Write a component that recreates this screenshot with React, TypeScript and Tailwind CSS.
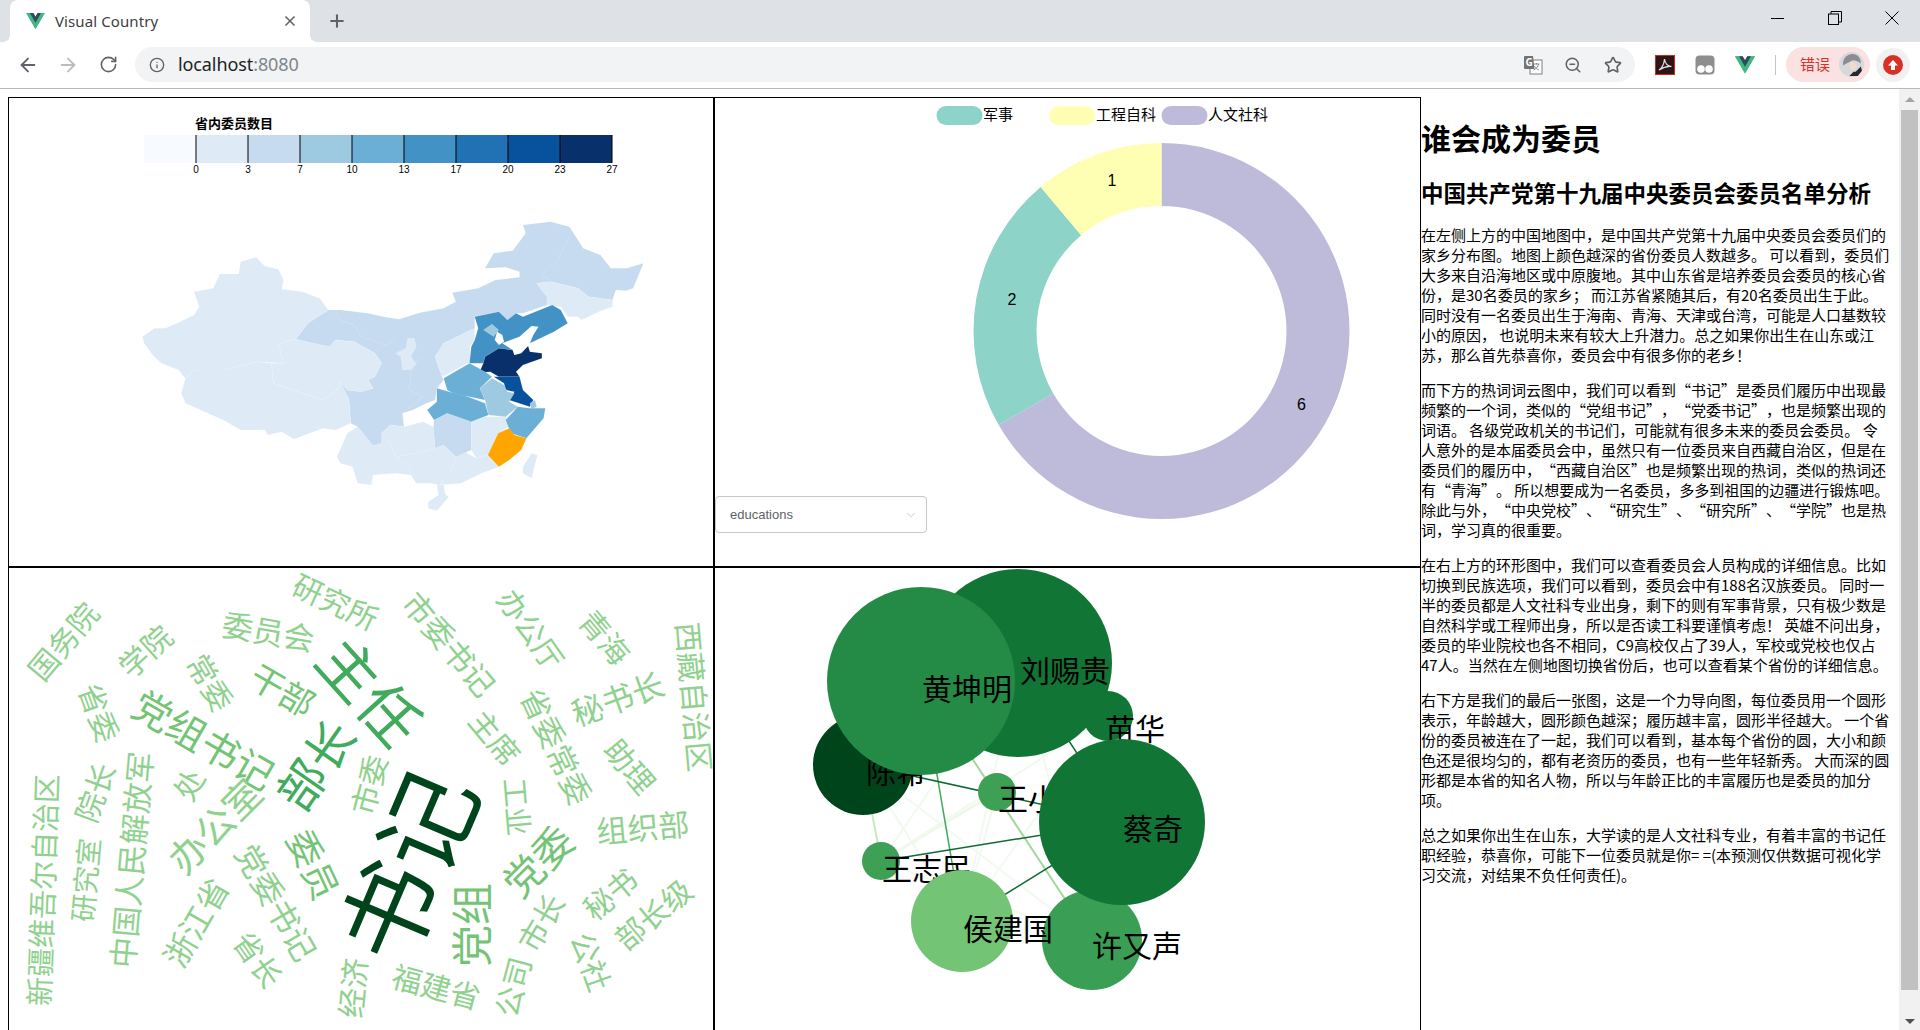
import React from "react";
import { ArrowLeft, ArrowRight, Info, Plus, RotateCw, Star, X, ZoomOut, ChevronDown } from "lucide-react";

const L1 = "#deebf7";
const L2 = "#c6dbef";
const L3 = "#9ecae1";
const L4 = "#6baed6";
const L5 = "#4292c6";

// province outlines, in the map's own units
const provinces: [string, string][] = [
  [L2, "605,330 640,330 720,340 765,350 810,358 870,338 940,325 975,305 965,278 1040,265 1090,240 1160,232 1160,215 1120,202 1060,205 1085,160 1140,152 1178,100 1170,75 1250,65 1305,80 1345,145 1395,165 1425,205 1470,205 1520,190 1490,265 1470,272 1440,270 1430,300 1360,290 1330,265 1250,245 1210,250 1240,290 1240,315 1170,340 1150,340 1125,360 1100,335 1030,350 1030,385 940,430 915,470 935,530 940,540 920,565 915,600 890,610 850,630 820,640 825,680 785,675 760,700 760,730 735,738 690,680 670,670 665,600 640,545 660,570 700,575 735,565 720,540 740,530 760,490 740,460 680,425 625,420 610,440 560,430 510,418 545,370"],
  [L1, "65,410 100,385 130,385 165,370 215,345 230,320 215,275 270,265 290,222 345,222 350,185 395,172 420,198 460,208 475,240 470,268 530,275 580,295 605,330 545,370 510,418 460,432 475,490 400,485 300,510 215,510 190,535 170,510 120,490 95,465 70,430"],
  [L1, "190,535 215,510 300,510 400,485 440,490 445,550 500,570 590,600 630,570 640,545 665,600 670,670 625,690 590,685 550,700 505,718 470,695 430,705 420,690 350,690 300,660 245,635 190,610 178,580"],
  [L1, "460,432 510,418 560,430 610,440 625,420 680,425 740,460 760,490 740,530 720,540 735,565 700,575 660,570 640,545 630,570 590,600 500,570 445,550 440,490 475,490"],
  [L1, "800,460 830,445 835,415 855,415 860,440 845,470 860,490 845,510 820,510 815,470"],
  [L1, "940,430 1030,385 1030,420 1015,440 1020,485 1010,490 935,530 915,470"],
  [L1, "1210,250 1250,245 1330,265 1360,290 1430,300 1430,320 1390,335 1340,360 1330,350 1300,350 1280,320 1240,315 1240,290"],
  [L1, "630,770 660,700 690,680 735,738 760,730 760,700 785,675 825,680 880,665 910,680 915,745 940,735 975,770 1000,755 1035,775 1068,765 1100,800 1050,820 990,850 925,855 905,850 860,850 845,825 800,820 735,825 730,855 690,850 675,800 640,790"],
  [L2, "912,660 950,640 1020,665 1020,750 975,770 940,735 915,745 910,680"],
  [L1, "1020,665 1060,650 1120,650 1130,680 1098,700 1068,765 1035,775 1020,750"],
  [L1, "920,855 940,855 945,885 955,890 920,932 895,925 895,905 925,885"],
  [L1, "1170,800 1195,760 1212,765 1195,835 1170,820"],
  [L5, "1030,350 1100,335 1125,360 1150,340 1170,350 1255,315 1280,330 1300,370 1260,395 1190,430 1200,405 1215,380 1195,378 1160,410 1110,430 1140,450 1100,445 1060,470 1055,490 1015,490 1020,440 1030,420 1040,385"],
  [L3, "1055,390 1080,372 1100,390 1085,410"],
  ["#ffffff", "1095,395 1110,405 1115,425 1100,435 1088,420"],
  ["#08306b", "1043,518 1055,490 1060,470 1100,445 1140,450 1145,465 1165,460 1185,438 1190,455 1225,460 1225,475 1170,495 1150,515 1160,530 1120,530 1100,530 1075,515"],
  ["#08519c", "1085,530 1120,530 1160,530 1170,570 1200,600 1190,620 1130,600 1145,575 1120,570 1115,550"],
  [L4, "940,535 1015,490 1060,515 1080,530 1045,565 1060,600 1015,590 975,585 950,570"],
  [L4, "920,565 955,575 1010,590 1060,610 1070,645 1020,665 950,640 912,660 892,630 920,605"],
  [L3, "1045,565 1080,535 1115,555 1125,575 1145,580 1130,605 1155,620 1120,650 1070,645 1060,600"],
  [L3, "1190,610 1205,600 1210,620 1195,628"],
  [L4, "1155,620 1190,625 1235,625 1230,655 1180,715 1135,700 1120,660"],
  ["#ffa500", "1130,685 1145,705 1180,715 1165,750 1130,780 1100,800 1068,765 1098,700"],
];

const borderLines = [
  "625,335 640,360 680,375 700,410 770,435 800,420",
  "870,470 845,520 840,570 880,590 820,640",
  "1305,110 1270,180 1225,225 1250,245",
  "780,720 800,770 860,760 915,745",
  "800,770 840,800 845,825",
  "975,770 960,820 925,855",
];

const legendColors = ["#f7fbff", "#deebf7", "#c6dbef", "#9ecae1", "#6baed6", "#4292c6", "#2171b5", "#08519c", "#08306b"];
const legendTicks = ["0", "3", "7", "10", "13", "17", "20", "23", "27"];

const G1 = "#8fd18e";
const G2 = "#74c476";

// word, x, y, rotation, size, colour
const words: [string, number, number, number, number, string][] = [
  ["国务院", 64, 642, -50, 30, G1],
  ["学院", 146, 652, -42, 30, G1],
  ["委员会", 268, 633, 10, 31, G1],
  ["研究所", 335, 603, 25, 30, G1],
  ["市委书记", 448, 645, 50, 31, G1],
  ["办公厅", 530, 630, 55, 30, G1],
  ["青海", 604, 638, 50, 30, G1],
  ["西藏自治区", 693, 697, 85, 30, G1],
  ["秘书长", 618, 700, -20, 32, G1],
  ["助理", 629, 767, 50, 30, G1],
  ["省委常委", 555, 747, 65, 31, G1],
  ["主席", 494, 738, 50, 30, G1],
  ["工业", 516, 807, 85, 29, G1],
  ["组织部", 643, 829, -5, 31, G1],
  ["党委", 539, 862, -45, 40, G2],
  ["党组", 473, 925, -90, 42, G2],
  ["市长", 542, 923, -60, 30, G1],
  ["秘书", 611, 895, -40, 30, G1],
  ["部长级", 654, 915, -40, 30, G1],
  ["公社", 590, 962, 70, 30, G1],
  ["公司", 514, 987, -75, 30, G1],
  ["福建省", 436, 988, 15, 30, G1],
  ["经济", 354, 988, -85, 30, G1],
  ["书记", 411, 868, -67, 98, "#00441b"],
  ["部长", 317, 766, -55, 48, "#41ab5d"],
  ["主任", 368, 693, 48, 60, "#41ab5d"],
  ["干部", 282, 691, 30, 34, G2],
  ["常委", 209, 683, 60, 30, G1],
  ["党组书记", 203, 741, 30, 39, G2],
  ["省委", 98, 713, 70, 30, G1],
  ["中国人民解放军", 133, 860, -85, 31, G1],
  ["院长", 96, 793, -70, 30, G1],
  ["处", 190, 785, -60, 30, G1],
  ["市委", 370, 785, -75, 30, G1],
  ["办公室", 216, 827, -45, 38, G1],
  ["新疆维吾尔自治区", 44, 890, -88, 29, G1],
  ["研究室", 87, 880, -85, 28, G1],
  ["党委书记", 275, 903, 60, 32, G1],
  ["委员", 312, 865, 65, 36, G2],
  ["浙江省", 197, 923, -60, 32, G1],
  ["省长", 257, 960, 55, 30, G1],
];

// x1, y1, x2, y2, colour, width
const links: [number, number, number, number, string, number][] = [
  [881, 861, 1018, 663, "#f2f9ef", 2],
  [881, 861, 1092, 940, "#f2f9ef", 2],
  [863, 765, 962, 921, "#f2f9ef", 2],
  [863, 765, 1092, 940, "#f2f9ef", 2],
  [997, 792, 962, 921, "#f2f9ef", 2],
  [997, 792, 881, 861, "#eef8ea", 3],
  [1018, 663, 962, 921, "#f2f9ef", 2],
  [1108, 716, 962, 921, "#f2f9ef", 2],
  [1108, 716, 881, 861, "#f2f9ef", 2],
  [1108, 716, 921, 681, "#eef8ea", 2],
  [1018, 663, 1092, 940, "#f2f9ef", 2],
  [863, 765, 881, 861, "#c7e9c0", 2],
  [921, 681, 1092, 940, "#a1d99b", 2],
  [921, 681, 962, 921, "#41ab5d", 1.5],
  [863, 765, 1122, 822, "#0f6a35", 1.5],
  [881, 861, 1122, 822, "#0f6a35", 1.5],
  [1018, 663, 1122, 822, "#0f6a35", 1.5],
  [1108, 716, 1122, 822, "#0f6a35", 1.5],
  [962, 921, 1122, 822, "#0f6a35", 1.5],
];

// cx, cy, r, colour, name, text x, text y
const people: [number, number, number, string, string, number, number][] = [
  [863, 765, 50, "#00441b", "陈希", 866, 772],
  [881, 861, 19, "#3ea055", "王志民", 882, 869],
  [1092, 940, 50, "#3a9f55", "许又声", 1092, 946],
  [1018, 663, 94, "#107535", "刘赐贵", 1020, 671],
  [1108, 716, 25, "#107535", "苗华", 1105, 729],
  [921, 681, 94, "#238b45", "黄坤明", 922, 689],
  [997, 792, 19, "#3ea055", "王小洪", 998, 799],
  [962, 921, 51, "#74c476", "侯建国", 963, 929],
  [1122, 822, 83, "#107535", "蔡奇", 1123, 829],
];

const paragraphs = [
  [
    "在左侧上方的中国地图中，是中国共产党第十九届中央委员会委员们的",
    "家乡分布图。地图上颜色越深的省份委员人数越多。 可以看到，委员们",
    "大多来自沿海地区或中原腹地。其中山东省是培养委员会委员的核心省",
    "份，是30名委员的家乡； 而江苏省紧随其后，有20名委员出生于此。",
    "同时没有一名委员出生于海南、青海、天津或台湾，可能是人口基数较",
    "小的原因， 也说明未来有较大上升潜力。总之如果你出生在山东或江",
    "苏，那么首先恭喜你，委员会中有很多你的老乡！",
  ],
  [
    "而下方的热词词云图中，我们可以看到“书记”是委员们履历中出现最",
    "频繁的一个词，类似的“党组书记”，“党委书记”，也是频繁出现的",
    "词语。 各级党政机关的书记们，可能就有很多未来的委员会委员。 令",
    "人意外的是本届委员会中，虽然只有一位委员来自西藏自治区，但是在",
    "委员们的履历中，“西藏自治区”也是频繁出现的热词，类似的热词还",
    "有“青海”。 所以想要成为一名委员，多多到祖国的边疆进行锻炼吧。",
    "除此与外，“中央党校”、“研究生”、“研究所”、“学院”也是热",
    "词，学习真的很重要。",
  ],
  [
    "在右上方的环形图中，我们可以查看委员会人员构成的详细信息。比如",
    "切换到民族选项，我们可以看到，委员会中有188名汉族委员。 同时一",
    "半的委员都是人文社科专业出身，剩下的则有军事背景，只有极少数是",
    "自然科学或工程师出身，所以是否读工科要谨慎考虑！ 英雄不问出身，",
    "委员的毕业院校也各不相同，C9高校仅占了39人，军校或党校也仅占",
    "47人。当然在左侧地图切换省份后，也可以查看某个省份的详细信息。",
  ],
  [
    "右下方是我们的最后一张图，这是一个力导向图，每位委员用一个圆形",
    "表示，年龄越大，圆形颜色越深；履历越丰富，圆形半径越大。 一个省",
    "份的委员被连在了一起，我们可以看到，基本每个省份的圆，大小和颜",
    "色还是很均匀的，都有老资历的委员，也有一些年轻新秀。 大而深的圆",
    "形都是本省的知名人物，所以与年龄正比的丰富履历也是委员的加分",
    "项。",
  ],
  [
    "总之如果你出生在山东，大学读的是人文社科专业，有着丰富的书记任",
    "职经验，恭喜你，可能下一位委员就是你= =(本预测仅供数据可视化学",
    "习交流，对结果不负任何责任)。",
  ],
];

const CX = 1161.5;
const CY = 331;
const arc = (from: number, to: number) => {
  const R = 188;
  const r = 125;
  const p = (rad: number, deg: number) => {
    const a = (deg * Math.PI) / 180;
    return `${CX + rad * Math.sin(a)} ${CY - rad * Math.cos(a)}`;
  };
  const large = to - from > 180 ? 1 : 0;
  return `M${p(R, from)} A${R} ${R} 0 ${large} 1 ${p(R, to)} L${p(r, to)} A${r} ${r} 0 ${large} 0 ${p(r, from)} Z`;
};

const VueLogo = ({ className }: { className?: string }) => (
  <svg viewBox="0 0 256 221" className={className}>
    <path d="M204.8 0H256L128 220.8 0 0h97.9L128 51.2 157.4 0z" fill="#41b883" />
    <path d="M0 0l128 220.8L256 0h-51.2L128 132.5 50.6 0z" fill="#41b883" />
    <path d="M50.6 0L128 133.1 204.8 0h-47.4L128 51.2 97.9 0z" fill="#35495e" />
  </svg>
);

const TabBar = () => (
  <div className="flex h-[42px] bg-[#dee1e6] pl-[10px]">
    <div className="relative flex h-[42px] w-[300px] items-center rounded-t-lg bg-white pl-4 pr-3">
      <span className="absolute bottom-0 -left-2 h-2 w-2 bg-[radial-gradient(circle_at_0_0,#dee1e6_8px,#ffffff_8px)]" />
      <span className="absolute bottom-0 -right-2 h-2 w-2 bg-[radial-gradient(circle_at_100%_0,#dee1e6_8px,#ffffff_8px)]" />
      <VueLogo className="h-4 w-[19px]" />
      <span className="ml-[10px] flex-1 text-[15px] tracking-[0.1px] text-[#3c4043]">Visual Country</span>
      <X className="h-4 w-4 text-[#5f6368]" strokeWidth={2.5} />
    </div>
    <div className="flex h-[42px] w-[54px] items-center justify-center">
      <Plus className="h-[20px] w-[20px] text-[#5f6368]" strokeWidth={2.5} />
    </div>
    <div className="ml-auto flex">
      <div className="flex h-[36px] w-[57px] items-center justify-center">
        <div className="h-px w-[13px] bg-black" />
      </div>
      <div className="flex h-[36px] w-[57px] items-center justify-center">
        <svg viewBox="0 0 14 14" className="h-[14px] w-[14px]" fill="none" stroke="#000" strokeWidth="1">
          <rect x="0.5" y="3" width="10" height="10.5" />
          <path d="M3 3V0.5h10.5V11H10.5" />
        </svg>
      </div>
      <div className="flex h-[36px] w-[57px] items-center justify-center">
        <svg viewBox="0 0 14 14" className="h-[14px] w-[14px]" fill="none" stroke="#000" strokeWidth="1">
          <path d="M0.5 0.5l13 13M13.5 0.5l-13 13" />
        </svg>
      </div>
    </div>
  </div>
);

const Toolbar = () => (
  <div className="flex h-[47px] items-center border-b border-[#b9b9b9] bg-white pb-px pl-2">
    <div className="flex h-10 w-10 items-center justify-center">
      <ArrowLeft className="h-[22px] w-[22px] text-[#5f6368]" />
    </div>
    <div className="flex h-10 w-10 items-center justify-center">
      <ArrowRight className="h-[22px] w-[22px] text-[#babcbe]" />
    </div>
    <div className="flex h-10 w-10 items-center justify-center">
      <RotateCw className="h-[19px] w-[19px] text-[#5f6368]" />
    </div>
    <div className="ml-[7px] flex h-[35px] w-[1500px] items-center rounded-full bg-[#f1f3f4] pl-[14px] pr-[2px]">
      <Info className="h-4 w-4 text-[#5f6368]" />
      <span className="ml-[13px] flex-1 text-[18px] tracking-[-0.1px] text-[#202124]">
        localhost<span className="text-[#80868b]">:8080</span>
      </span>
      <div className="flex h-10 w-10 items-center justify-center">
        <svg viewBox="0 0 20 20" className="h-[20px] w-[20px]">
          <rect x="7" y="5" width="12" height="14" fill="#fff" stroke="#7d8084" />
          <path d="M10.500 9h6M13.500 8v1.500M15.500 9c-.5 3-2.500 5-5 6M11.500 11c1 2 2.500 3.500 4.500 4" fill="none" stroke="#7d8084" strokeWidth="0.9" />
          <path d="M2 1h8l1.500 13H2a1 1 0 0 1-1-1V2a1 1 0 0 1 1-1z" fill="#6f7276" />
          <text x="6.200" y="11" fontSize="10" fontWeight="700" fill="#fff" textAnchor="middle">G</text>
        </svg>
      </div>
      <div className="flex h-10 w-10 items-center justify-center">
        <ZoomOut className="h-[18px] w-[18px] text-[#5f6368]" />
      </div>
      <div className="flex h-10 w-10 items-center justify-center">
        <Star className="h-[18px] w-[18px] text-[#5f6368]" strokeWidth={2.2} />
      </div>
    </div>
    <div className="ml-[10px] flex h-10 w-10 items-center justify-center">
      <svg viewBox="0 0 20 20" className="h-5 w-5">
        <rect x="0.5" y="0.5" width="19" height="19" fill="#2b1517" stroke="#e2231a" />
        <path d="M4 15c3-2 5-6 5.500-11 .5 4 3 7 7 7.500-4-.5-8 .5-12.500 3.500z" fill="none" stroke="#e8e0e0" strokeWidth="1.200" />
      </svg>
    </div>
    <div className="flex h-10 w-10 items-center justify-center">
      <svg viewBox="0 0 20 20" className="h-5 w-5">
        <rect x="0.5" y="0.5" width="19" height="19" rx="4" fill="#8e8e8e" />
        <circle cx="6" cy="14" r="3.800" fill="#fff" />
        <circle cx="14" cy="14" r="3.800" fill="#fff" />
      </svg>
    </div>
    <div className="flex h-10 w-10 items-center justify-center">
      <VueLogo className="h-[18px] w-5" />
    </div>
    <div className="ml-[10px] h-5 w-px bg-[#c4c7c9]" />
    <div className="ml-[10px] flex h-[35px] w-[84px] items-center rounded-full bg-[#f9e2e1] pl-[14px]">
      <span className="text-[15px] text-[#d93025]">错误</span>
      <svg viewBox="0 0 24 24" className="ml-[9px] h-[25px] w-[25px]">
        <circle cx="12" cy="12" r="12" fill="#d6d8dc" />
        <path d="M4 13C3 6 8 2 13 2c5 0 8 4 8 9-3-2-5-3-8-3-3 2-6 3-9 5z" fill="#8b8d93" />
        <path d="M10 10c3-1 6 0 7 3 0 3-2 5-4 5-2-1-3-4-3-8z" fill="#f0dccd" />
        <path d="M10 23l4-4 2 0 5-5 1 4-4 5z" fill="#2a2630" />
      </svg>
    </div>
    <div className="ml-[6px] flex h-[34px] w-[34px] items-center justify-center rounded-full bg-[#f1f1f1]">
      <div className="flex h-5 w-5 items-center justify-center rounded-full bg-[#d93025]">
        <svg viewBox="0 0 12 12" className="h-3 w-3">
          <path d="M6 1L11 6.500H8V11H4V6.500H1z" fill="#fff" />
        </svg>
      </div>
    </div>
  </div>
);

const MapPanel = () => (
  <svg viewBox="9 98 704 468" className="h-full w-full">
    <text x="195" y="128" fontSize="13" fontWeight="700">省内委员数目</text>
    {legendColors.map((c, i) => (
      <rect key={c} x={144 + i * 52} y="135" width="52" height="28" fill={c} />
    ))}
    {legendTicks.map((t, i) => (
      <g key={t}>
        <line x1={196 + i * 52} x2={196 + i * 52} y1="135" y2="163" stroke="#000" />
        <text x={196 + i * 52} y="173" fontSize="10" textAnchor="middle">{t}</text>
      </g>
    ))}
    <g transform="translate(120 200) scale(0.3444 0.3333)">
      {provinces.map(([c, pts], i) => (
        <polygon key={i} points={pts} fill={c} stroke={c === "#ffffff" ? "none" : "#ffffff"} strokeOpacity="0.12" strokeWidth="2" />
      ))}
      {borderLines.map((pts) => (
        <polyline key={pts} points={pts} fill="none" stroke="#ffffff" strokeOpacity="0.25" strokeWidth="2" />
      ))}
    </g>
  </svg>
);

const DonutPanel = () => (
  <div className="relative h-full w-full">
    <svg viewBox="715 98 705 468" className="h-full w-full">
      <rect x="936.5" y="106" width="46" height="19" rx="9.500" fill="#8dd3c7" />
      <text x="983" y="120" fontSize="15">军事</text>
      <rect x="1049" y="106" width="46" height="19" rx="9.500" fill="#ffffb3" />
      <text x="1096" y="120" fontSize="15">工程自科</text>
      <rect x="1161.5" y="106" width="46" height="19" rx="9.500" fill="#bebada" />
      <text x="1208" y="120" fontSize="15">人文社科</text>
      <path d={arc(0, 240)} fill="#bebada" />
      <path d={arc(240, 320)} fill="#8dd3c7" />
      <path d={arc(320, 360)} fill="#ffffb3" />
      <text x="1112" y="186" fontSize="16" textAnchor="middle">1</text>
      <text x="1012" y="305" fontSize="16" textAnchor="middle">2</text>
      <text x="1301.5" y="410" fontSize="16" textAnchor="middle">6</text>
    </svg>
    <div className="absolute left-0 top-[398px] flex h-[37px] w-[212px] items-center justify-between rounded border border-[#c6c8d0] bg-white pl-[14px] pr-[8px]">
      <span className="text-[13px] text-[#606266]">educations</span>
      <ChevronDown className="h-[14px] w-[14px] text-[#c0c4cc]" strokeWidth={1.5} />
    </div>
  </div>
);

const CloudPanel = () => (
  <svg viewBox="9 568 704 468" className="h-full w-full">
    {words.map(([w, x, y, rot, size, c], i) => (
      <text key={i} x={x} y={y} fontSize={size} fill={c} textAnchor="middle" dominantBaseline="central" transform={`rotate(${rot} ${x} ${y})`}>
        {w}
      </text>
    ))}
  </svg>
);

const ForcePanel = () => (
  <svg viewBox="715 568 705 468" className="h-full w-full">
    {links.map(([x1, y1, x2, y2, c, w], i) => (
      <line key={i} x1={x1} y1={y1} x2={x2} y2={y2} stroke={c} strokeWidth={w} />
    ))}
    {people.map(([cx, cy, r, c, name, tx, ty]) => (
      <g key={name}>
        <circle cx={cx} cy={cy} r={r} fill={c} />
        <text x={tx} y={ty} fontSize="30" dominantBaseline="central">{name}</text>
      </g>
    ))}
  </svg>
);

const Article = () => (
  <div className="w-[478px] shrink-0 font-['Noto_Sans_CJK_SC',sans-serif] text-[15px] leading-[20px] text-black [text-spacing-trim:space-all]">
    <h1 className="mt-[33px] text-[30px] font-bold leading-[30px]">谁会成为委员</h1>
    <h2 className="mt-[29px] whitespace-nowrap text-[22.5px] font-bold leading-[22px]">中国共产党第十九届中央委员会委员名单分析</h2>
    <div className="mt-[22px] flex flex-col gap-[15px]">
      {paragraphs.map((lines) => (
        <p key={lines[0]}>
          {lines.map((line) => (
            <span key={line} className="block whitespace-nowrap">{line}</span>
          ))}
        </p>
      ))}
    </div>
  </div>
);

const Scrollbar = () => (
  <div className="flex h-[941px] w-[21px] shrink-0 flex-col items-center bg-[#f1f1f1]">
    <div className="flex h-[21px] w-full items-center justify-center">
      <div className="h-0 w-0 border-x-[5px] border-b-[5px] border-x-transparent border-b-[#a3a3a3]" />
    </div>
    <div className="h-[880px] w-[17px] bg-[#c1c1c1]" />
    <div className="flex flex-1 items-end pb-[6px]">
      <div className="h-0 w-0 border-x-[5px] border-t-[5px] border-x-transparent border-t-[#505050]" />
    </div>
  </div>
);

const App = () => {
  return (
    <div className="h-[1030px] w-[1920px] overflow-hidden bg-white font-['Liberation_Sans','Noto_Sans_CJK_SC',sans-serif]">
      <div className="font-['Noto_Sans','Noto_Sans_CJK_SC',sans-serif]">
        <TabBar />
        <Toolbar />
      </div>
      <div className="flex h-[941px] overflow-hidden">
        <div className="shrink-0 pl-2 pt-2">
          <div className="grid w-[1413px] grid-cols-[706px_707px] grid-rows-[470px_470px]">
            <div className="border border-black"><MapPanel /></div>
            <div className="border border-black"><DonutPanel /></div>
            <div className="overflow-hidden border border-black"><CloudPanel /></div>
            <div className="overflow-hidden border border-black"><ForcePanel /></div>
          </div>
        </div>
        <Article />
        <Scrollbar />
      </div>
    </div>
  );
};

export default App;
